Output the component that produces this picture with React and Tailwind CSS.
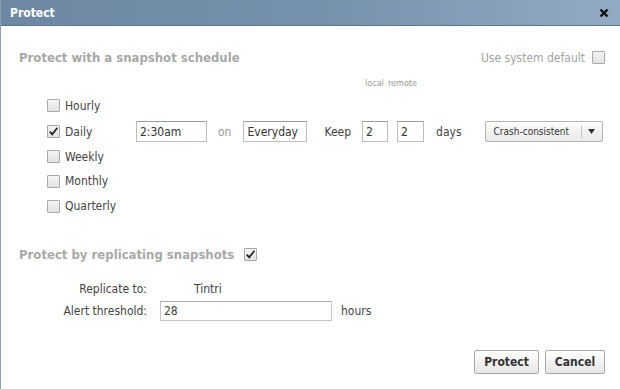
import React from 'react';

const font = { fontFamily: '"DejaVu Sans Condensed", "DejaVu Sans", sans-serif' };

const Box = ({ checked }) => (
  <span className="inline-flex w-[13px] h-[13px] shrink-0 items-center justify-center border border-[#a9a9a9] bg-gradient-to-b from-[#f4f4f4] to-[#e2e2e2] rounded-[1px]">
    {checked && (
      <svg width="11" height="11" viewBox="0 0 11 11">
        <path d="M1.8 5.6 L4.2 8.4 L9.4 1.8" fill="none" stroke="#222" strokeWidth="1.7" />
      </svg>
    )}
  </span>
);

const Field = ({ value, w }) => (
  <div className={`${w} h-[21px] border border-[#bcbcbc] border-t-[#9d9d9d] bg-white flex items-center px-[3px] text-[12px] text-[#333]`}>
    {value}
  </div>
);

const rows = [
  { label: 'Hourly', h: 'h-[26px]' },
  { label: 'Daily', h: 'h-[26px]', checked: true },
  { label: 'Weekly', h: 'h-[24px]' },
  { label: 'Monthly', h: 'h-[25px]' },
  { label: 'Quarterly', h: 'h-[25px]' },
];

export default function App() {
  return (
    <div style={font} className="w-[620px] h-[389px] bg-white border-l border-[#8e9fb3] flex flex-col overflow-hidden">
      {/* Title bar */}
      <div className="h-[26px] shrink-0 bg-gradient-to-r from-[#6e88a4] via-[#7590ac] to-[#93aac3] flex items-center justify-between pl-[9px] pr-[11px] border-b border-[#5f7892]">
        <span className="text-white font-bold text-[12px]">Protect</span>
        <svg width="10" height="10" viewBox="0 0 10 10">
          <path d="M1.5 1.5 L8.5 8.5 M8.5 1.5 L1.5 8.5" stroke="#111" strokeWidth="2.4" />
        </svg>
      </div>

      <div className="flex-1 flex flex-col pl-[18px] pr-[15px]">
        {/* Schedule header */}
        <div className="mt-[22px] flex items-center justify-between">
          <span className="font-bold text-[13px] text-[#a8a8a8]">Protect with a snapshot schedule</span>
          <div className="flex items-center gap-[7px] text-[12px] text-[#a3a3a3]">
            <span>Use system default</span>
            <Box />
          </div>
        </div>

        <div className="mt-[10px] h-[12px] flex items-center pl-[346px] gap-[4px] text-[9px] text-[#9a9a9a]">
          <span>local</span>
          <span>remote</span>
        </div>

        <div className="mt-[3px] flex flex-col pl-[28px]">
          {rows.map((r) => (
            <div key={r.label} className={`${r.h} flex items-center`}>
              <div className="w-[89px] flex items-center gap-[5px] text-[12px] text-[#444]">
                <Box checked={r.checked} />
                <span>{r.label}</span>
              </div>
              {r.checked && (
                <div className="flex items-center text-[12px] text-[#444]">
                  <Field value="2:30am" w="w-[71px]" />
                  <span className="ml-[11px] mr-[12px] text-[#9a9a9a]">on</span>
                  <Field value="Everyday" w="w-[64px]" />
                  <span className="ml-[17px] mr-[11px]">Keep</span>
                  <Field value="2" w="w-[26px]" />
                  <div className="w-[9px]" />
                  <Field value="2" w="w-[27px]" />
                  <span className="ml-[12px]">days</span>
                  <div className="ml-[23px] w-[118px] h-[21px] border border-[#b4b4b4] rounded-[2px] bg-gradient-to-b from-[#fdfdfd] to-[#e9e9e9] flex items-center text-[10px] text-[#333]">
                    <span className="flex-1 pl-[8px]">Crash-consistent</span>
                    <span className="h-[12px] border-l border-[#c4c4c4]" />
                    <span className="w-[20px] flex justify-center">
                      <svg width="7" height="5" viewBox="0 0 7 5"><path d="M0 0 H7 L3.5 5 Z" fill="#333" /></svg>
                    </span>
                  </div>
                </div>
              )}
            </div>
          ))}
        </div>

        {/* Replication header */}
        <div className="mt-[26px] flex items-center gap-[10px]">
          <span className="font-bold text-[13px] text-[#a8a8a8]">Protect by replicating snapshots</span>
          <Box checked />
        </div>

        <div className="mt-[16px] flex items-center h-[18px] text-[12px] text-[#444]">
          <span className="w-[128px] text-right">Replicate to:</span>
          <span className="ml-[47px]">Tintri</span>
        </div>
        <div className="mt-[3px] flex items-center text-[12px] text-[#444]">
          <span className="w-[128px] text-right">Alert threshold:</span>
          <div className="ml-[13px] w-[172px] h-[20px] border border-[#c6c6c6] border-t-[#a8a8a8] flex items-center px-[3px]">28</div>
          <span className="ml-[9px]">hours</span>
        </div>

        <div className="mt-[29px] flex justify-end gap-[6px]">
          <button className="w-[65px] h-[24px] border border-[#a9a9a9] rounded-[2px] bg-gradient-to-b from-[#ffffff] to-[#e6e6e6] font-bold text-[12px] text-[#333]">Protect</button>
          <button className="w-[60px] h-[24px] border border-[#a9a9a9] rounded-[2px] bg-gradient-to-b from-[#ffffff] to-[#e6e6e6] font-bold text-[12px] text-[#333]">Cancel</button>
        </div>
      </div>
    </div>
  );
}
